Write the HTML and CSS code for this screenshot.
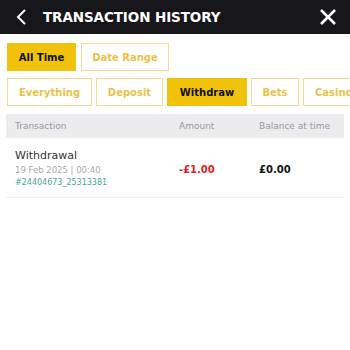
FILE: index.html
```html
<!DOCTYPE html>
<html>
<head>
<meta charset="utf-8">
<link rel="stylesheet" href="styles.css">
</head>
<body>
<div class="page">
  <header class="topbar">
    <svg class="back" width="12" height="16" viewBox="0 0 12 16"><path d="M10 1 L3 8 L10 15" fill="none" stroke="#fff" stroke-width="2"/></svg>
    <h1 class="title">TRANSACTION HISTORY</h1>
    <svg class="close" width="18" height="18" viewBox="0 0 18 18"><path d="M2 2 L16 16 M16 2 L2 16" fill="none" stroke="#fff" stroke-width="2.6"/></svg>
  </header>
  <div class="tabs tabs-time">
    <button class="tab w-all active">All Time</button>
    <button class="tab w-range">Date Range</button>
  </div>
  <div class="tabs tabs-type">
    <button class="tab w-every">Everything</button>
    <button class="tab w-dep">Deposit</button>
    <button class="tab w-wd active">Withdraw</button>
    <button class="tab w-bets">Bets</button>
    <button class="tab w-cas">Casino</button>
  </div>
  <div class="table">
    <div class="thead">
      <span class="c1">Transaction</span>
      <span class="c2">Amount</span>
      <span class="c3">Balance at time</span>
    </div>
    <div class="row">
      <div class="c1">
        <div class="name">Withdrawal</div>
        <div class="date">19 Feb 2025 | 00:40</div>
        <div class="ref">#24404673_25313381</div>
      </div>
      <div class="c2 amount">-£1.00</div>
      <div class="c3 balance">£0.00</div>
    </div>
  </div>
</div>
</body>
</html>
```
FILE: styles.css
```css
* { box-sizing: border-box; }
html, body { margin: 0; padding: 0; background: #fff; }
body { font-family: "DejaVu Sans", "Open Sans", sans-serif; width: 350px; height: 350px; overflow: hidden; }
.topbar {
  height: 34px;
  background: #16161b;
  display: flex;
  align-items: center;
  padding: 0 13px 1px 15px;
}
.back { flex: none; }
.title {
  margin: 0 0 0 16px;
  color: #fff;
  font-size: 13.5px;
  font-weight: 800;
  letter-spacing: -0.1px;
  flex: 1;
  white-space: nowrap;
}
.close { flex: none; }
.tabs {
  display: flex;
  gap: 5px;
  padding: 0 7px;
  white-space: nowrap;
  overflow: hidden;
}
.tabs-time { margin-top: 9px; }
.tabs-type { margin-top: 7px; gap: 4px; }
.tab {
  flex: none;
  height: 28px;
  border: 1px solid #f3dc91;
  background: #fff;
  color: #e9c24b;
  font-family: inherit;
  font-size: 10px;
  font-weight: 700;
  padding: 0;
  text-align: center;
}
.w-all { width: 69px; }
.w-range { width: 88px; }
.w-every { width: 85px; }
.w-dep { width: 67px; }
.w-wd { width: 80px; }
.w-bets { width: 48px; }
.w-cas { width: 64px; text-align: left; padding-left: 11px; }
.tab.active {
  background: #f0c20c;
  border-color: #f0c20c;
  color: #111;
}
.table { margin: 8px 6px 0 6px; }
.thead {
  display: flex;
  height: 24px;
  align-items: center;
  background: #ececee;
  color: #9a9a9e;
  font-size: 9px;
}
.c1 { width: 173px; padding-left: 9px; }
.c2 { width: 80px; }
.c3 { flex: 1; }
.row {
  display: flex;
  align-items: center;
  padding: 11px 0 8px;
  border-bottom: 1px solid #eeeeee;
}
.name { font-size: 11px; color: #333; line-height: 14px; }
.date { font-size: 8.5px; color: #a8a8ac; line-height: 13px; margin-top: 1px; }
.ref { font-size: 8px; color: #4aa98b; line-height: 12px; }
.amount { color: #e02424; font-weight: 700; font-size: 10px; }
.balance { color: #111; font-weight: 700; font-size: 10px; }
```
